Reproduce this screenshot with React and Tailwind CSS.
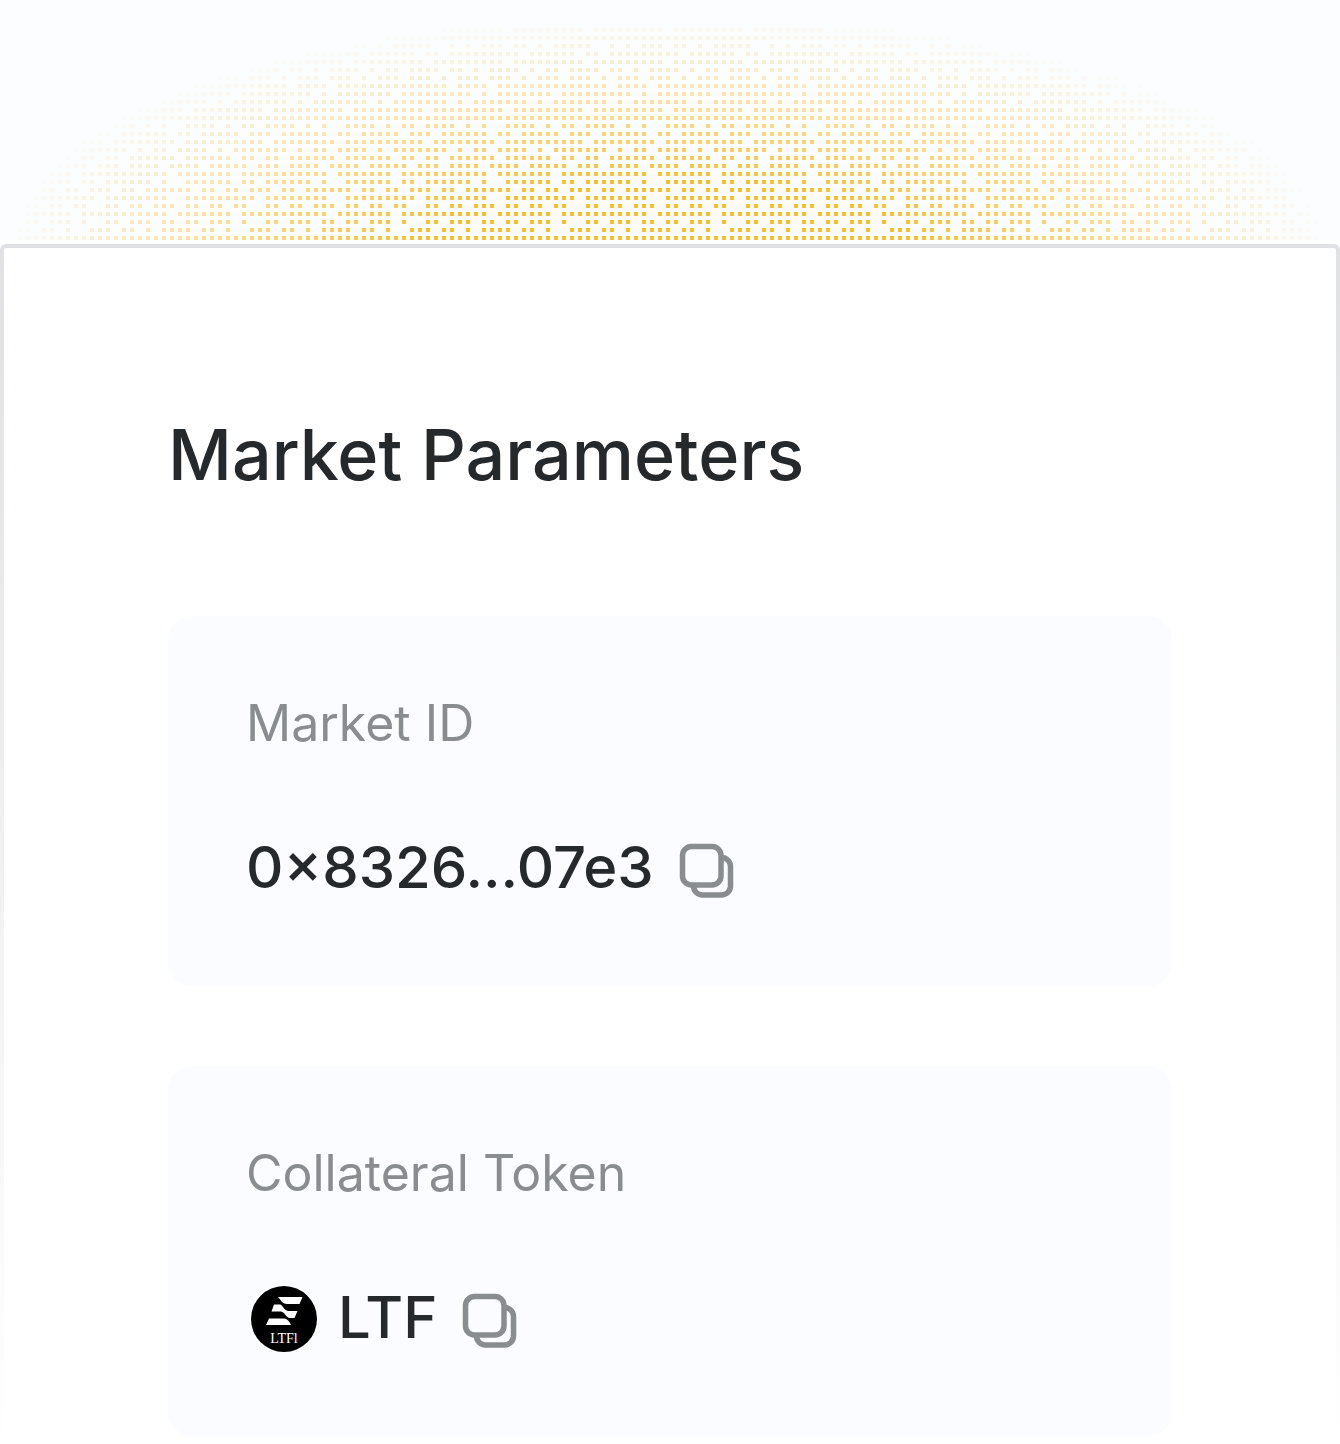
// Dot pattern from the bottom row up; each string repeats across the band.
const ROWS = [
  "11111111111111111111",
  "01110110101111011010",
  "10011011101101101110",
  "11111111111011111110",
  "10011011011101101101",
  "11011111111001111111",
  "01110110111111011011",
  "11011111101001111110",
  "11111111111011111110",
  "10111011110111101111",
  "11011011111101111110",
  "11111101011011110101",
  "11101111111101111111",
  "01110111111011011111",
  "11011110101001111010",
  "11111111111111111111",
  "11101111111110111111",
  "11111101011111110101",
  "11111111101011111110",
  "11111101111011111111",
  "01110101110111010111",
  "01111011010111101011",
  "11101111111110111111",
  "11011011111111101111",
  "11110010101110110101",
  "11111111111111111111",
  "11101111111110111111",
];

function DotField() {
  const dots = [];
  ROWS.forEach((row, r) => {
    const y = 236 - r * 8;
    for (let c = 0; c < 168; c++) {
      if (row[(c + 10) % 20] === "0") continue;
      const x = c * 8 + 2;
      const dx = (x + 2 - 668) / 664;
      const dy = (242 - y) / 236;
      const d = Math.sqrt(dx * dx + dy * dy);
      if (d >= 1) continue;
      const o = Math.min(1, (1 - d) * 1.6 * (1 - dy * 0.5));
      dots.push(<rect key={r + "-" + c} x={x} y={y} width="4" height="4" opacity={o.toFixed(2)} />);
    }
  });
  return (
    <svg aria-hidden="true" viewBox="0 0 1340 240" className="block w-full bg-[#fcfdff]" fill="#f8bf2c">
      {dots}
    </svg>
  );
}

function CopyButton({ label }) {
  return (
    <button type="button" aria-label={label} className="mt-2 ml-[25px] block text-[#8a8d90]">
      <svg viewBox="0 0 56 56" className="block size-14" fill="none" stroke="currentColor" strokeWidth="5.5">
        <rect x="3.500" y="3.500" width="38.500" height="38.500" rx="9" />
        <path d="M42 14.500h0.500a9 9 0 0 1 9 9V43a9 9 0 0 1-9 9H23.500a9 9 0 0 1-9-9V42" />
      </svg>
    </button>
  );
}

function TokenLogo() {
  return (
    <svg role="img" aria-label="LTFI" viewBox="0 0 66 66" className="mt-1 ml-[5px] block size-[66px]">
      <circle cx="33" cy="33" r="33" fill="#000" />
      <g fill="#fff">
        <path d="M27 11h24.500l-3 7H36c-5 0-6-4-9-7z" />
        <path d="M23 18.500h6c2.500 0 4 6.500 9 6.500h8.500l-3 7H39c-4 0-5-6-9-6.500H20.500z" />
        <path d="M18 32.500h15c3 0 5.500 3 7 6.500H15z" />
      </g>
      <text x="33" y="57" textAnchor="middle" fill="#fff" fontSize="14" fontFamily="Liberation Serif, serif">LTFl</text>
    </svg>
  );
}

function Card({ title, children }) {
  return (
    <section className="rounded-3xl bg-[#fafcff] px-[78px] pt-[71px] pb-[79px]">
      <h2 className="text-[50px] leading-[72px] text-[#8a8d90]">{title}</h2>
      <div className="mt-[68px] flex h-20 items-center">{children}</div>
    </section>
  );
}

export default function App() {
  return (
    <div className="min-h-screen bg-white font-['Inter',sans-serif] text-[#26292c]">
      <DotField />
      <div className="mt-1 rounded-md bg-linear-to-b from-[#e0e1e2] to-white p-1">
        <main className="rounded-xs bg-white px-[164px] pt-[159px] pb-1">
          <h1 className="text-[70px] leading-[96px] font-medium">Market Parameters</h1>
          <div className="mt-[113px] flex flex-col gap-20">
            <Card title="Market ID">
              <span className="text-[58px] leading-[80px] font-medium">0×8326...07e3</span>
              <CopyButton label="Copy market ID" />
            </Card>
            <Card title="Collateral Token">
              <TokenLogo />
              <span className="ml-[21px] text-[58px] leading-[80px] font-medium">LTF</span>
              <CopyButton label="Copy token address" />
            </Card>
          </div>
        </main>
      </div>
    </div>
  );
}
